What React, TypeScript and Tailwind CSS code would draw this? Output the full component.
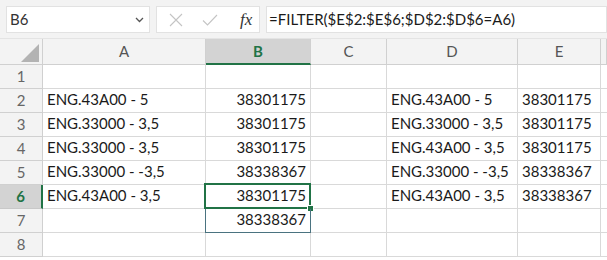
import React from "react";

const font = { fontFamily: "Lato, 'Open Sans', sans-serif" };

const rows: { a: string; b: string; d: string; e: string }[] = [
  { a: "", b: "", d: "", e: "" },
  { a: "ENG.43A00 - 5", b: "38301175", d: "ENG.43A00 - 5", e: "38301175" },
  { a: "ENG.33000 - 3,5", b: "38301175", d: "ENG.33000 - 3,5", e: "38301175" },
  { a: "ENG.33000 - 3,5", b: "38301175", d: "ENG.43A00 - 3,5", e: "38301175" },
  { a: "ENG.33000 - -3,5", b: "38338367", d: "ENG.33000 - -3,5", e: "38338367" },
  { a: "ENG.43A00 - 3,5", b: "38301175", d: "ENG.43A00 - 3,5", e: "38338367" },
  { a: "", b: "38338367", d: "", e: "" },
  { a: "", b: "", d: "", e: "" },
];

const grid = "grid grid-cols-[43px_163px_105px_76px_131px_83px_1fr]";
const cell = "h-[24px] border-r border-b border-[#d9d9d9] text-[15px] text-[#1a1a1a] flex items-end pb-[2px] px-[4px] whitespace-nowrap overflow-visible";

export default function App() {
  return (
    <div className="w-[607px] h-[260px] overflow-hidden bg-white" style={font}>
      {/* formula bar */}
      <div className="h-[39px] bg-[#f3f3f3] flex items-start pt-[6px] pl-[6px] gap-[6px] border-b border-[#e4e4e4]">
        <div className="w-[144px] h-[27px] bg-white border border-[#e2e2e2] flex items-center justify-between pl-[3px] pr-[5px]">
          <span className="text-[15px] text-[#333]">B6</span>
          <svg width="9" height="6" viewBox="0 0 9 6">
            <path d="M1 1 L4.5 4.5 L8 1" fill="none" stroke="#555" strokeWidth="1.3" />
          </svg>
        </div>
        <div className="w-[104px] h-[27px] bg-white border border-[#e2e2e2] flex items-center pl-[12px]">
          <svg width="14" height="14" viewBox="0 0 14 14">
            <path d="M1 1 L13 13 M13 1 L1 13" stroke="#c4c4c4" strokeWidth="1.1" />
          </svg>
          <svg width="16" height="12" viewBox="0 0 16 12" className="ml-[19px]">
            <path d="M1 6.5 L5.5 11 L15 1" fill="none" stroke="#c4c4c4" strokeWidth="1.1" />
          </svg>
          <span className="ml-[22px] text-[17px] italic text-[#333]" style={{ fontFamily: "'Liberation Serif', serif" }}>
            fx
          </span>
        </div>
        <div className="flex-1 h-[27px] bg-white border border-[#e2e2e2] flex items-center pl-[2px]">
          <span className="text-[15px] text-[#1a1a1a]">=FILTER($E$2:$E$6;$D$2:$D$6=A6)</span>
        </div>
      </div>
      {/* column header */}
      <div className={grid + " h-[26px] bg-[#f3f3f3]"}>
        <div className="border-r border-b border-[#d0d0d0] flex items-end justify-end pr-[3px] pb-[2px]">
          <svg width="18" height="18" viewBox="0 0 18 18">
            <path d="M18 0 L18 18 L0 18 Z" fill="#b3b3b3" />
          </svg>
        </div>
        {["A", "B", "C", "D", "E", ""].map((l) =>
          l === "B" ? (
            <div key={l} className="bg-[#d3d3d3] border-r border-[#d0d0d0] border-b-2 border-b-[#217346] flex items-center justify-center text-[15px] font-bold text-[#217346]">
              B
            </div>
          ) : (
            <div key={l || "x"} className="border-r border-b border-[#d0d0d0] flex items-center justify-center text-[15px] text-[#555]">
              {l}
            </div>
          )
        )}
      </div>
      {/* rows */}
      {rows.map((r, i) => {
        const n = i + 1;
        const sel = n === 6;
        return (
          <div key={n} className={grid}>
            <div
              className={
                "h-[24px] border-b flex items-center justify-center text-[15px] " +
                (sel
                  ? "bg-[#d3d3d3] border-b-[#c8c8c8] border-r-2 border-r-[#217346] font-bold text-[#217346]"
                  : "bg-[#f3f3f3] border-r border-[#d0d0d0] text-[#666]")
              }
            >
              {n}
            </div>
            <div className={cell}>{r.a}</div>
            <div className={cell + " justify-end relative"}>
              {r.b}
              {sel && (
                <>
                  <div className="absolute left-[-2px] top-[-2px] right-[-1px] bottom-[-1px] border-2 border-[#217346]" />
                  <div className="absolute right-[-4px] bottom-[-4px] w-[7px] h-[7px] bg-[#217346] border border-white" />
                </>
              )}
              {n === 7 && (
                <div className="absolute left-[-1px] top-[0px] right-[-1px] bottom-[-1px] border border-t-0 border-[#4a7380]" />
              )}
            </div>
            <div className={cell}></div>
            <div className={cell}>{r.d}</div>
            <div className={cell}>{r.e}</div>
            <div className={cell}></div>
          </div>
        );
      })}
    </div>
  );
}
